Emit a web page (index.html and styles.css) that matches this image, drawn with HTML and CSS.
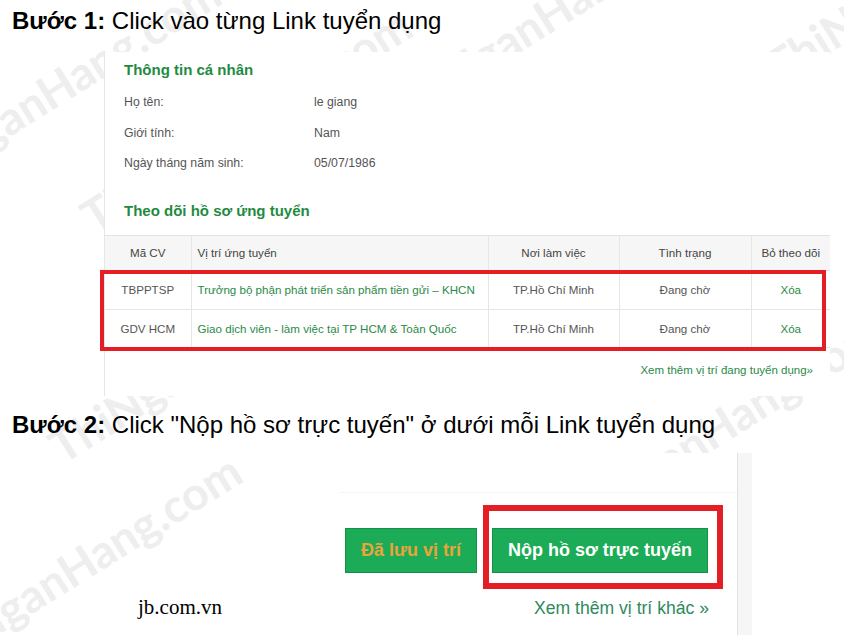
FILE: index.html
```html
<!DOCTYPE html>
<html lang="vi">
<head>
<meta charset="utf-8">
<title>Hướng dẫn nộp hồ sơ</title>
<link rel="stylesheet" href="styles.css">
</head>
<body>
<div class="page">
  <div class="watermarks" aria-hidden="true">
    <span class="wm wm-1">ThiNganHang.com</span>
    <span class="wm wm-2">ThiNganHang.com</span>
    <span class="wm wm-3">ThiNganHang.com</span>
    <span class="wm wm-4">ThiNganHang.com</span>
    <span class="wm wm-5">ThiNganHang.com</span>
    <span class="wm wm-6">ThiNganHang.com</span>
    <span class="wm wm-7">ThiNganHang.com</span>
  </div>

  <h2 class="step step-one"><b>Bước 1:</b> Click vào từng Link tuyển dụng</h2>

  <section class="shot shot-one">
    <h3 class="title">Thông tin cá nhân</h3>
    <dl class="info">
      <div class="info-row"><dt>Họ tên:</dt><dd>le giang</dd></div>
      <div class="info-row"><dt>Giới tính:</dt><dd>Nam</dd></div>
      <div class="info-row"><dt>Ngày tháng năm sinh:</dt><dd>05/07/1986</dd></div>
    </dl>
    <h3 class="title title-track">Theo dõi hồ sơ ứng tuyển</h3>
    <div class="table-wrap">
      <table class="apps">
        <colgroup>
          <col class="w-code"><col class="w-pos"><col class="w-place"><col class="w-status"><col class="w-del">
        </colgroup>
        <thead>
          <tr><th>Mã CV</th><th class="left">Vị trí ứng tuyển</th><th>Nơi làm việc</th><th>Tình trạng</th><th>Bỏ theo dõi</th></tr>
        </thead>
        <tbody>
          <tr class="r1"><td>TBPPTSP</td><td class="left link">Trưởng bộ phận phát triển sản phẩm tiền gửi – KHCN</td><td>TP.Hồ Chí Minh</td><td>Đang chờ</td><td class="link">Xóa</td></tr>
          <tr class="r2"><td>GDV HCM</td><td class="left link">Giao dịch viên - làm việc tại TP HCM &amp; Toàn Quốc</td><td>TP.Hồ Chí Minh</td><td>Đang chờ</td><td class="link">Xóa</td></tr>
        </tbody>
      </table>
      <div class="mark-rows"></div>
    </div>
    <a class="more" href="#">Xem thêm vị trí đang tuyển dụng»</a>
  </section>

  <h2 class="step step-two"><b>Bước 2:</b> Click "Nộp hồ sơ trực tuyến" ở dưới mỗi Link tuyển dụng</h2>

  <div class="step-two-body">
    <span class="src">jb.com.vn</span>
    <section class="shot shot-two">
      <div class="actions">
        <button class="btn btn-saved" type="button">Đã lưu vị trí</button>
        <div class="mark-box"><button class="btn btn-apply" type="button">Nộp hồ sơ trực tuyến</button></div>
      </div>
      <a class="more-lg" href="#">Xem thêm vị trí khác »</a>
    </section>
  </div>
</div>
</body>
</html>
```

FILE: styles.css
```css
* { box-sizing: border-box; }

html, body {
  margin: 0;
  padding: 0;
  background: #fff;
}

body {
  font-family: "Liberation Sans", Arial, sans-serif;
  overflow: hidden;
}

.page {
  position: relative;
  width: 844px;
  height: 635px;
  overflow: hidden;
}

/* watermark layer (sits behind the pasted screenshots) */
.watermarks {
  position: absolute;
  inset: 0;
  z-index: 0;
  pointer-events: none;
}

.wm {
  position: absolute;
  transform: translate(-50%, -50%) rotate(-32deg);
  font-family: Lato, "DejaVu Sans", sans-serif;
  font-weight: 700;
  font-size: 46px;
  color: #eeeeee;
  white-space: nowrap;
}

.wm-1 { left: 55px; top: 88px; }
.wm-2 { left: 76px; top: 566px; }
.wm-3 { left: 214px; top: 350px; }
.wm-4 { left: 716px; top: 428px; }
.wm-5 { left: 930px; top: -30px; }
.wm-6 { left: 552px; top: 12px; }
.wm-7 { left: 246px; top: 120px; }

/* step headings */
.step {
  position: relative;
  z-index: 1;
  margin: 0;
  padding-left: 12px;
  font-size: 24px;
  line-height: 28px;
  font-weight: normal;
  color: #000;
}

.step b { font-weight: bold; }

.step-one { padding-top: 7px; }
.step-two { margin-top: 15px; }

/* screenshot 1 */
.shot {
  position: relative;
  z-index: 1;
  background: #fff;
}

.shot-one {
  margin: 17px 0 0 104px;
  width: 726px;
  border-left: 1px solid #e6e6e6;
  padding: 8px 0 18px;
}

.title {
  margin: 0;
  padding-left: 19px;
  font-size: 15px;
  line-height: 20px;
  font-weight: bold;
  color: #1f8b3f;
}

.info {
  margin: 7px 0 0;
  padding-left: 19px;
}

.info-row {
  display: grid;
  grid-template-columns: 190px auto;
  height: 30.5px;
  line-height: 30px;
  font-size: 12.3px;
  color: #555;
}

.info-row dt, .info-row dd { margin: 0; }

.title-track { margin-top: 22px; }

.table-wrap {
  position: relative;
  margin-top: 14px;
  width: 725px;
}

.apps {
  width: 725px;
  border-collapse: collapse;
  table-layout: fixed;
  font-size: 11.6px;
  color: #555;
}

.w-code { width: 86px; }
.w-pos { width: 297px; }
.w-place { width: 131px; }
.w-status { width: 132px; }
.w-del { width: 79px; }

.apps th, .apps td {
  padding: 0 6px;
  text-align: center;
  border-left: 1px solid #e6e6e6;
  border-bottom: 1px solid #e6e6e6;
  white-space: nowrap;
}

.apps th:first-child, .apps td:first-child { border-left: none; }

.apps th {
  height: 35px;
  background: #f6f6f6;
  border-top: 1px solid #e3e3e3;
  font-weight: normal;
  color: #444;
}

.apps .left { text-align: left; }
.apps .link { color: #2a8a48; }

.apps .r1 td { height: 39px; }
.apps .r2 td { height: 38px; }

.mark-rows {
  position: absolute;
  left: -5px;
  top: 35px;
  width: 726px;
  height: 81px;
  border: 4px solid #e31e25;
}

.more {
  display: block;
  width: 708px;
  margin-top: 14px;
  text-align: right;
  font-size: 11.5px;
  line-height: 16px;
  color: #2a8a48;
  text-decoration: none;
}

/* step 2 */
.step-two-body {
  display: flex;
  align-items: flex-end;
  margin-top: 14px;
}

.src {
  position: relative;
  z-index: 1;
  width: 340px;
  padding-left: 138px;
  margin-bottom: 19px;
  font-family: "Liberation Serif", "Times New Roman", serif;
  font-size: 21px;
  line-height: 24px;
  color: #000;
}

.shot-two {
  width: 398px;
  height: 185px;
  border-right: 1px solid #e2e2e2;
  box-shadow: 14px 0 0 #f6f6f6;
  padding-top: 39px;
}

.actions {
  display: flex;
  justify-content: flex-end;
  align-items: flex-start;
  gap: 6px;
  padding-right: 14px;
  padding-top: 12px;
  border-top: 1px solid #f4f4f4;
}

.btn {
  height: 45px;
  margin: 0;
  padding: 0;
  border: 1px solid #159048;
  border-radius: 0;
  background: #1cab56;
  font-family: "Liberation Sans", Arial, sans-serif;
  font-size: 18px;
  font-weight: bold;
  color: #fff;
}

.btn-saved {
  width: 132px;
  margin-top: 23px;
  color: #e9a53c;
}

.btn-apply { width: 216px; }

.mark-box {
  border: 6px solid #e31e25;
  padding: 17px 9px 10px 3px;
}

.more-lg {
  display: block;
  margin-top: 9px;
  padding-right: 28px;
  text-align: right;
  font-size: 17.6px;
  line-height: 20px;
  color: #2f8a5e;
  text-decoration: none;
}
```
